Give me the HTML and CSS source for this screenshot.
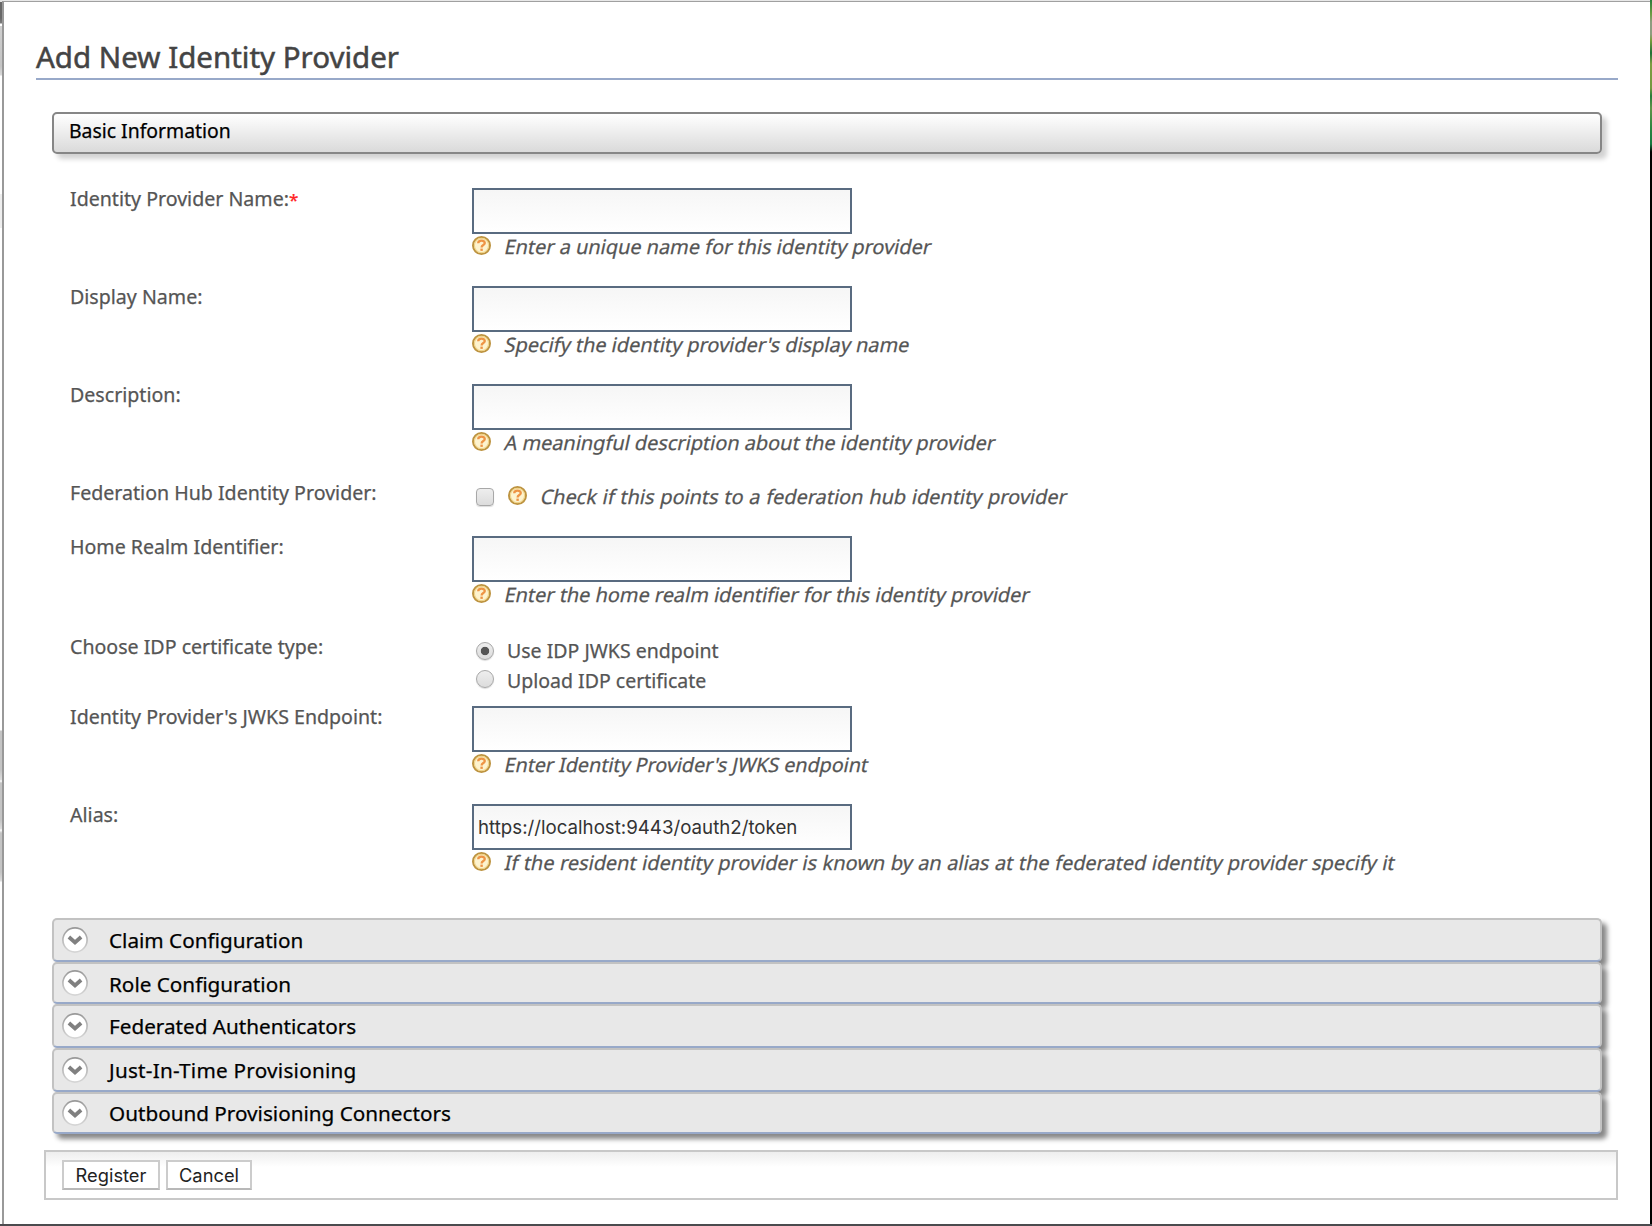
FILE: index.html
```html
<!DOCTYPE html>
<html lang="en">
<head>
<meta charset="utf-8">
<title>Add New Identity Provider</title>
<link rel="stylesheet" href="styles.css">
</head>
<body>
<svg width="0" height="0" class="defs" aria-hidden="true">
  <defs>
    <linearGradient id="ring" x1="0" y1="0" x2="0" y2="1">
      <stop offset="0" stop-color="#999"/><stop offset="1" stop-color="#d6d6d6"/>
    </linearGradient>
    <symbol id="help" viewBox="0 0 19 19">
      <circle cx="9.5" cy="9.5" r="8.5" fill="#fdf3cf" stroke="#bd9340" stroke-width="2"/>
      <circle cx="9.5" cy="9.5" r="7.1" fill="none" stroke="#f0d48a" stroke-width="1.1"/>
      <path d="M6.2 7.2C6.3 3.7 12.8 3.7 12.8 7.1C12.8 9.2 9.6 9 9.6 11.5" fill="none" stroke="#ee9445" stroke-width="2.3"/>
      <rect x="8.4" y="12.6" width="2.4" height="2.3" fill="#ee9445"/>
    </symbol>
    <symbol id="chevron" viewBox="0 0 26 26">
      <circle cx="13" cy="13" r="12.1" fill="#fff" stroke="url(#ring)" stroke-width="1.6"/>
      <path d="M6.9 10L13 15.5L19.1 10" fill="none" stroke="#808080" stroke-width="3.8"/>
    </symbol>
  </defs>
</svg>
<div class="window">
  <div class="edge-left"></div>
  <main class="page">
    <h1 class="title">Add New Identity Provider</h1>
    <h2 class="section-bar">Basic Information</h2>
    <form class="form">
      <div class="row">
        <label class="label">Identity Provider Name:<span class="required">*</span></label>
        <div class="field"><input class="text" type="text"><div class="help"><svg class="help-icon"><use href="#help"/></svg><span class="hint">Enter a unique name for this identity provider</span></div></div>
      </div>
      <div class="row">
        <label class="label">Display Name:</label>
        <div class="field"><input class="text" type="text"><div class="help"><svg class="help-icon"><use href="#help"/></svg><span class="hint">Specify the identity provider's display name</span></div></div>
      </div>
      <div class="row">
        <label class="label">Description:</label>
        <div class="field"><input class="text" type="text"><div class="help"><svg class="help-icon"><use href="#help"/></svg><span class="hint">A meaningful description about the identity provider</span></div></div>
      </div>
      <div class="row row-check">
        <label class="label">Federation Hub Identity Provider:</label>
        <div class="field check-line"><input class="choice box" type="checkbox"><div class="help"><svg class="help-icon"><use href="#help"/></svg><span class="hint hint-check">Check if this points to a federation hub identity provider</span></div></div>
      </div>
      <div class="row row-realm">
        <label class="label">Home Realm Identifier:</label>
        <div class="field"><input class="text" type="text"><div class="help"><svg class="help-icon"><use href="#help"/></svg><span class="hint">Enter the home realm identifier for this identity provider</span></div></div>
      </div>
      <div class="row row-cert">
        <label class="label">Choose IDP certificate type:</label>
        <div class="field options">
          <label class="option"><input class="choice" type="radio" name="cert" checked><span>Use IDP JWKS endpoint</span></label>
          <label class="option option-last"><input class="choice" type="radio" name="cert"><span>Upload IDP certificate</span></label>
        </div>
      </div>
      <div class="row">
        <label class="label">Identity Provider's JWKS Endpoint:</label>
        <div class="field"><input class="text" type="text"><div class="help"><svg class="help-icon"><use href="#help"/></svg><span class="hint hint-jwks">Enter Identity Provider's JWKS endpoint</span></div></div>
      </div>
      <div class="row row-alias">
        <label class="label">Alias:</label>
        <div class="field"><input class="text" type="text" value="https://localhost:9443/oauth2/token" spellcheck="false"><div class="help"><svg class="help-icon"><use href="#help"/></svg><span class="hint hint-long">If the resident identity provider is known by an alias at the federated identity provider specify it</span></div></div>
      </div>
    </form>
    <section class="accordion">
      <h2 class="panel"><svg class="chevron"><use href="#chevron"/></svg><span>Claim Configuration</span></h2>
      <h2 class="panel panel-short"><svg class="chevron"><use href="#chevron"/></svg><span class="role">Role Configuration</span></h2>
      <h2 class="panel"><svg class="chevron"><use href="#chevron"/></svg><span>Federated Authenticators</span></h2>
      <h2 class="panel"><svg class="chevron"><use href="#chevron"/></svg><span class="spaced">Just-In-Time Provisioning</span></h2>
      <h2 class="panel panel-short"><svg class="chevron"><use href="#chevron"/></svg><span>Outbound Provisioning Connectors</span></h2>
    </section>
    <div class="actions"><button class="button register">Register</button><button class="button cancel">Cancel</button></div>
  </main>
  <div class="edge-right"></div>
</div>
</body>
</html>
```
FILE: styles.css
```css
* { box-sizing: border-box; }
body { margin: 0; background: #fff; font-family: "Noto Sans", sans-serif; font-size: 19.6px; color: #555; -webkit-text-stroke: .25px; }
h1, h2 { margin: 0; font-weight: 400; }
.defs { position: absolute; }

.window { display: flex; height: 1226px; border-bottom: 2px solid #4b4b4e; }
.edge-left {
  width: 2px;
  background: linear-gradient(#e4e4e4 0 2px, #686868 2px 18px, #7c7c7c 23px, #fff 24px 26px, #cfcfcf 26px, #c4c4c4 66px, #d8d8d8 75px, #fff 76px 194px, #eee 194px 228px, #fff 228px 730px, #c4c4c4 731px 770px, #ddd 780px, #fff 781px, #c4c4c4 783px 820px, #ddd 829px, #fff 830px, #c4c4c4 833px 872px, #ddd 881px, #fff 882px);
}
.edge-right {
  width: 2px;
  background: linear-gradient(#2a7a3c 0, #6c9c42 14px, #8f9c80 22px, #8f9c80 34px, #7a9c3c 40px, #1f7038 53px, #7c9c42 64px, #75983f 88px, #267c3c 96px, #609348 108px, #2b8540 128px, #187840 144px, #000 152px);
}
.page {
  flex: 1;
  display: flex;
  flex-direction: column;
  padding: 0 32px;
  border-left: 2px solid #999;
  border-top: 1px solid #a0a0a0;
  box-shadow: 0 -1px #e8e8e8;
  margin-top: 1px;
}

.title { height: 78px; padding-top: 38px; border-bottom: 2px solid #98a9c9; font-size: 29.5px; line-height: 34px; color: #444; -webkit-text-stroke: .5px; }
.section-bar {
  height: 42px;
  margin: 32px 16px 34px;
  padding-left: 15px;
  border: 2px solid #868686;
  border-radius: 5px;
  background: linear-gradient(#fff, #dadada);
  box-shadow: 5px 5px 5px #d2d2d2;
  font-size: 19.4px;
  line-height: 34px;
  color: #000;
}

.form { padding-left: 34px; }
.row { display: grid; grid-template-columns: 402px 1fr; height: 98px; line-height: 22px; }
.row-check { height: 54px; }
.row-realm { height: 100px; }
.row-cert { height: 70px; }
.row-alias { height: 114px; }
.label { white-space: nowrap; }
.required { color: #f22; font-size: 17px; }
.text {
  display: block;
  width: 380px;
  height: 46px;
  padding: 1px 4px 0;
  border: 2px solid #596b80;
  border-radius: 0;
  outline: 0;
  background: linear-gradient(#f6f6f6, #fff);
  font: 18.7px Inter, sans-serif;
  color: #333;
  -webkit-text-stroke: 0;
}
.help { display: flex; align-items: flex-start; padding-top: 2px; }
.help-icon { width: 19px; height: 19px; margin-right: 14px; }
.hint { display: inline-block; font-size: 19.9px; white-space: nowrap; transform: skewX(-12deg); }
.hint-long { word-spacing: .4px; }
.hint-check { word-spacing: .6px; }
.hint-jwks { font-size: 19.7px; }
.check-line { display: flex; padding: 2px 0 0 4px; }
.choice {
  appearance: none;
  flex: none;
  width: 18px;
  height: 18px;
  margin: 0;
  border: 1.5px solid #a8a8a8;
  border-radius: 50%;
  background: linear-gradient(#eee, #dcdcdc);
  box-shadow: 0 1px 1px #ddd;
}
.choice:checked { background: radial-gradient(circle, #555 0 3.8px, transparent 4.6px), linear-gradient(#eee, #dcdcdc); }
.box { margin: 4px 14px 0 0; border-radius: 4px; }
.options { padding: 4px 0 0 4px; }
.option { display: flex; gap: 13px; height: 30px; white-space: nowrap; font-size: 19.5px; }
.option .choice { margin-top: 2px; }
.option-last .choice { margin-top: 0; }

.accordion { margin: 0 16px; }
.panel {
  display: flex;
  align-items: center;
  gap: 21px;
  height: 44px;
  padding-left: 8px;
  border: 2px solid #c2c2c2;
  border-bottom-color: #98a9c9;
  border-radius: 5px;
  background: #e8e8e8;
  box-shadow: 5px 5px 5px #888;
  font-size: 20.7px;
  line-height: 28px;
  color: #000;
}
.panel-short { height: 42px; }
.role { padding-top: 2px; }
.spaced { letter-spacing: .25px; }
.chevron { width: 26px; height: 26px; }

.actions {
  display: flex;
  gap: 6px;
  height: 50px;
  margin: 16px 0 0 8px;
  padding: 8px 16px;
  border: 2px solid #c8c8c8;
  background: linear-gradient(#eee, #fff 15px);
}
.button {
  height: 30px;
  padding: 0;
  border: 2px solid #ccc;
  border-bottom-color: #b8b8b8;
  background: #fff;
  font: 18.3px Inter, sans-serif;
  color: #222;
  -webkit-text-stroke: 0;
}
.register { width: 98px; }
.cancel { width: 86px; }
```
